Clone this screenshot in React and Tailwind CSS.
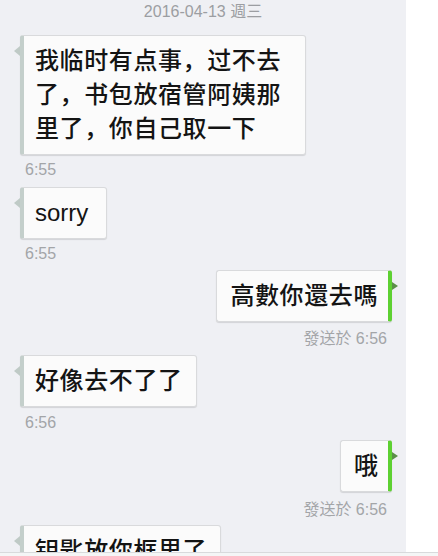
const font = { fontFamily: '"Liberation Sans", "Noto Sans CJK SC", sans-serif' };

const LeftBubble = ({ children, className = '', pad = 'pr-[13px]' }) => (
  <div className={`relative self-start ml-[20px] ${className}`}>
    {/* tail */}
    <div className="absolute left-[-6px] top-[11px] w-0 h-0 border-y-[5px] border-y-transparent border-r-[6px] border-r-[#bfcac6]"></div>
    <div className={`bg-[#fbfbfb] border border-[#d9dadc] border-l-[4px] border-l-[#c4cfcb] rounded-[3px] pl-[11px] ${pad} py-[8px] text-[24px] leading-[34px] text-[#141414] shadow-[0_1px_1px_rgba(0,0,0,0.12)]`}>
      {children}
    </div>
  </div>
);

const RightBubble = ({ children, className = '' }) => (
  <div className={`relative self-end mr-[14px] ${className}`}>
    <div className="absolute right-[-6px] top-[12px] w-0 h-0 border-y-[4px] border-y-transparent border-l-[6px] border-l-[#5c8f4a]"></div>
    <div className="bg-[#fbfbfb] border border-[#d9dadc] border-r-[4px] border-r-[#5ed132] rounded-[3px] pl-[13px] pr-[10px] py-[8px] text-[24px] leading-[34px] text-[#141414] shadow-[0_1px_1px_rgba(0,0,0,0.12)]">
      {children}
    </div>
  </div>
);

const Time = ({ children, className = '' }) => (
  <div className={`text-[16px] leading-[18px] text-[#a3a5a8] ${className}`}>{children}</div>
);

export default function App() {
  return (
    <div className="w-[438px] h-[556px] bg-white flex flex-col overflow-hidden" style={font}>
      <div className="flex flex-row h-[552px]">
        <div className="w-[406px] h-[552px] overflow-hidden bg-[#eff0f4] flex flex-col">
          <div className="pt-[2px] text-center text-[16px] leading-[20px] text-[#9c9ea2]">2016-04-13 週三</div>

          <LeftBubble className="mt-[13px]" pad="pr-[24px]">
            <div className="font-medium tracking-[0.6px]">
              我临时有点事，过不去<br />了，书包放宿管阿姨那<br />里了，你自己取一下
            </div>
          </LeftBubble>
          <Time className="mt-[6px] ml-[25px]">6:55</Time>

          <LeftBubble className="mt-[8px]" pad="pr-[18px]">sorry</LeftBubble>
          <Time className="mt-[6px] ml-[25px]">6:55</Time>

          <RightBubble className="mt-[7px]">
            <span className="font-medium tracking-[0.6px]">高數你還去嗎</span>
          </RightBubble>
          <Time className="mt-[8px] self-end mr-[19px]">發送於 6:56</Time>

          <LeftBubble className="mt-[7px]">
            <span className="font-medium tracking-[0.6px]">好像去不了了</span>
          </LeftBubble>
          <Time className="mt-[7px] ml-[25px]">6:56</Time>

          <RightBubble className="mt-[8px]">
            <span className="font-medium">哦</span>
          </RightBubble>
          <Time className="mt-[9px] self-end mr-[19px]">發送於 6:56</Time>

          <LeftBubble className="mt-[6px]">
            <span className="font-medium tracking-[0.6px]">钥匙放你框里了</span>
          </LeftBubble>
        </div>
        <div className="flex-1 bg-white"></div>
      </div>
      <div className="h-[4px] border-t border-[#d8dadc] bg-[#f4f6f6]"></div>
    </div>
  );
}
